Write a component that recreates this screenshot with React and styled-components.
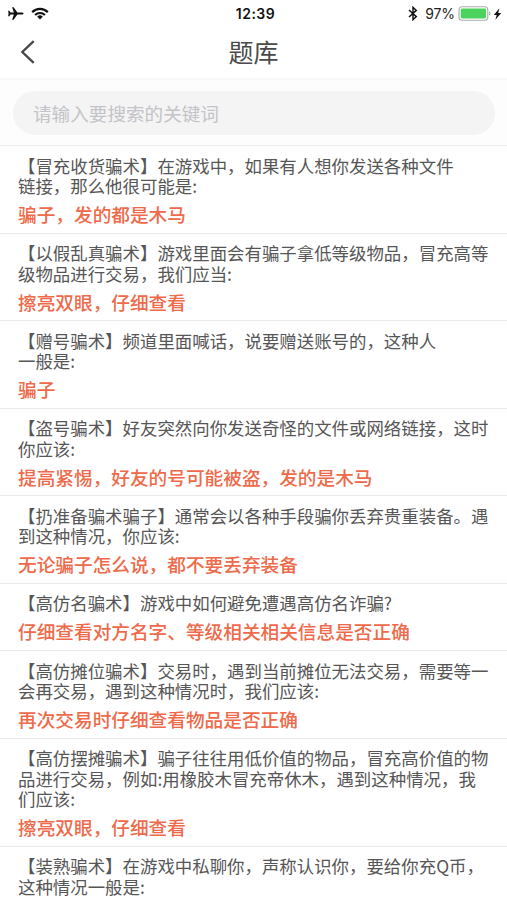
import React from 'react';
import styled, { createGlobalStyle } from 'styled-components';

const GlobalStyle = createGlobalStyle`
  * { box-sizing: border-box; }
  html, body { margin: 0; background: #fff; overflow: hidden; }
  body { font-family: "Noto Sans CJK SC", sans-serif; color: #565656; }
`;

const Screen = styled.main`
  width: 507px;
  height: 900px;
  overflow: hidden;
  background: #fff;
`;

const StatusBar = styled.div`
  display: grid;
  grid-template-columns: 1fr auto 1fr;
  align-items: center;
  height: 27px;
  padding: 0 5px 0 7px;
  color: #111;
  font-family: Inter, "Liberation Sans", sans-serif;
`;

const StatusGroup = styled.div`
  display: flex;
  align-items: center;
  justify-content: ${(p) => (p.$end ? 'flex-end' : 'flex-start')};
  gap: ${(p) => p.$gap}px;
`;

const Clock = styled.span`
  margin-left: 2px;
  font-size: 14px;
  font-weight: 600;
  letter-spacing: 0.5px;
`;

const Percent = styled.span`
  font-size: 14px;
  letter-spacing: -0.1px;
  color: #222;
  margin: 0 3px 0 7px;
`;

const Icon = styled.svg`
  display: block;
  flex: none;
`;

const NavBar = styled.header`
  display: grid;
  grid-template-columns: 60px 1fr 60px;
  align-items: center;
  height: 53px;
  padding-bottom: 2px;
  border-bottom: 2px solid #f7f7f7;
`;

const BackButton = styled.button`
  display: flex;
  padding: 1px 0 0 20px;
  border: 0;
  background: none;
`;

const Title = styled.h1`
  margin: -2px 0 0;
  text-align: center;
  font-size: 25px;
  line-height: 36px;
  font-weight: 400;
  color: #4a4a4a;
`;

const SearchBar = styled.div`
  height: 65px;
  padding: 11px 12px 0 13px;
  background: #fdfdfd;
`;

const SearchInput = styled.input`
  display: block;
  width: 100%;
  height: 44px;
  padding: 0 20px 2px;
  border: 0;
  border-radius: 22px;
  outline: 0;
  background: #f4f4f4;
  font-family: inherit;
  font-size: 18.6px;
  &::placeholder { color: #c3c3c8; opacity: 1; }
`;

const List = styled.ul`
  margin: 0;
  padding: 0;
  list-style: none;
`;

const Item = styled.li`
  padding: 9.5px 0 8px 18px;
  border-top: 1px solid #ebebeb;
`;

const Question = styled.p`
  margin: 0;
  white-space: pre;
  font-size: 17.43px;
  line-height: 20.5px;
`;

const Answer = styled.p`
  margin: 6.5px 0 0;
  white-space: pre;
  font-size: 18.67px;
  line-height: 21.6px;
  font-weight: 500;
  color: #ee6a4a;
`;

const items = [
  ['【冒充收货骗术】在游戏中，如果有人想你发送各种文件\n链接，那么他很可能是:', '骗子，发的都是木马'],
  ['【以假乱真骗术】游戏里面会有骗子拿低等级物品，冒充高等\n级物品进行交易，我们应当:', '擦亮双眼，仔细查看'],
  ['【赠号骗术】频道里面喊话，说要赠送账号的，这种人\n一般是:', '骗子'],
  ['【盗号骗术】好友突然向你发送奇怪的文件或网络链接，这时\n你应该:', '提高紧惕，好友的号可能被盗，发的是木马'],
  ['【扔准备骗术骗子】通常会以各种手段骗你丢弃贵重装备。遇\n到这种情况，你应该:', '无论骗子怎么说，都不要丢弃装备'],
  ['【高仿名骗术】游戏中如何避免遭遇高仿名诈骗?', '仔细查看对方名字、等级相关相关信息是否正确'],
  ['【高仿摊位骗术】交易时，遇到当前摊位无法交易，需要等一\n会再交易，遇到这种情况时，我们应该:', '再次交易时仔细查看物品是否正确'],
  ['【高仿摆摊骗术】骗子往往用低价值的物品，冒充高价值的物\n品进行交易，例如:用橡胶木冒充帝休木，遇到这种情况，我\n们应该:', '擦亮双眼，仔细查看'],
  ['【装熟骗术】在游戏中私聊你，声称认识你，要给你充Q币，\n这种情况一般是:', ''],
];

const Airplane = () => (
  <Icon width="17" height="15" viewBox="0 0 17 15">
    <path
      d="M16.5 7.5c0 .6-.8 1-1.9 1h-4.2L6.6 13.8H5.1l1.8-5.3H3.5l-1.2 1.8H1.1l.5-2.8-.5-2.8h1.2l1.2 1.8h3.4L5.1 1.2h1.5l3.8 5.3h4.2c1.1 0 1.9.4 1.9 1z"
      fill="#111"
    />
  </Icon>
);

const Wifi = () => (
  <Icon width="18" height="13" viewBox="0 0 18 13">
    <g fill="none" stroke="#111" strokeWidth="2.2">
      <path d="M1.2 5.1a11 11 0 0 1 15.6 0" />
      <path d="M4.1 8a7 7 0 0 1 9.8 0" />
    </g>
    <path d="M6.2 9.7a4 4 0 0 1 5.6 0L9 12.5z" fill="#111" />
  </Icon>
);

const Bluetooth = () => (
  <Icon width="10" height="15" viewBox="0 0 10 15">
    <path d="M1 4l7.3 6.6L5 13.7V1.3l3.3 3.1L1 11" fill="none" stroke="#111" strokeWidth="1.45" />
  </Icon>
);

const Battery = () => (
  <Icon width="35" height="15" viewBox="0 0 35 15">
    <rect x="1" y=".8" width="28.8" height="13.4" rx="3" fill="#fff" stroke="#aaaeaa" strokeWidth="1.1" />
    <rect x="2.7" y="2.6" width="25.4" height="9.8" rx="1.4" fill="#4cd35e" />
    <path d="M31 5.4c1.9.6 1.9 3.6 0 4.2z" fill="#aaaeaa" />
  </Icon>
);

const Bolt = () => (
  <Icon width="9" height="12" viewBox="0 0 8 12">
    <path d="M5.9.2L.3 6.9h2.9L1.9 11.8 7.7 4.9H4.7z" fill="#111" />
  </Icon>
);

export default function App() {
  return (
    <Screen>
      <GlobalStyle />
      <StatusBar>
        <StatusGroup $gap={7}>
          <Airplane />
          <Wifi />
        </StatusGroup>
        <Clock>12:39</Clock>
        <StatusGroup $end $gap={0}>
          <Bluetooth />
          <Percent>97%</Percent>
          <Battery />
          <Bolt />
        </StatusGroup>
      </StatusBar>
      <NavBar>
        <BackButton aria-label="返回">
          <Icon width="16" height="24" viewBox="0 0 16 24">
            <path d="M13.7 1.2L2.3 12l11.4 10.8" fill="none" stroke="#484848" strokeWidth="2.3" />
          </Icon>
        </BackButton>
        <Title>题库</Title>
      </NavBar>
      <SearchBar>
        <SearchInput placeholder="请输入要搜索的关键词" />
      </SearchBar>
      <List>
        {items.map(([question, answer]) => (
          <Item key={question}>
            <Question>{question}</Question>
            {answer && <Answer>{answer}</Answer>}
          </Item>
        ))}
      </List>
    </Screen>
  );
}
